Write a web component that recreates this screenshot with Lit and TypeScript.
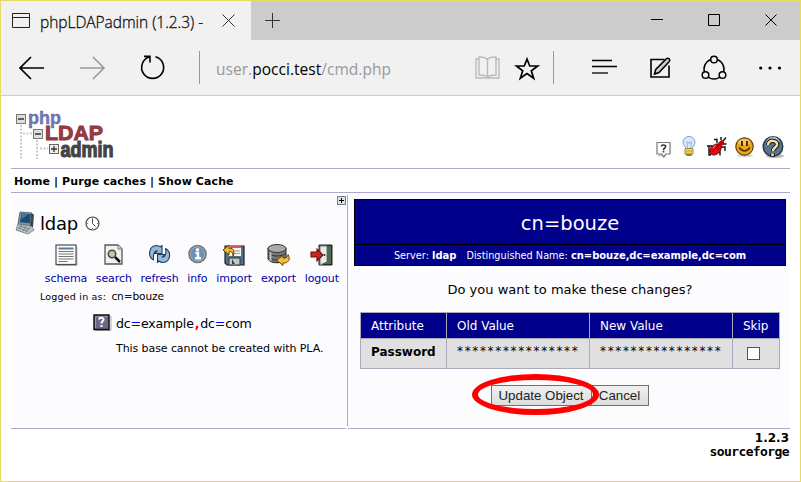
import { LitElement, html, css, svg } from "lit";
import { customElement, property } from "lit/decorators.js";

const icons: Record<string, unknown> = {
  page: svg`<path d="M.5.5h17v14H.5zM1 4.5h16" fill="none" stroke="#222"/>`,
  close: svg`<path d="M.5.5l12 12M12.5.5l-12 12" stroke="#333" fill="none"/>`,
  plus: svg`<path d="M7.5 0v15M0 7.5h15" stroke="#333" fill="none"/>`,
  min: svg`<path d="M0 5.5h12" stroke="#000"/>`,
  max: svg`<path d="M.5.5h11v11H.5z" stroke="#000" fill="none"/>`,
  exit: svg`<path d="M.5.5l11 11M11.5.5l-11 11" stroke="#000" fill="none"/>`,
  back: svg`<path d="M25 12H1M12 1L1 12l11 11" stroke="#000" stroke-width="1.7" fill="none"/>`,
  forward: svg`<path d="M0 12h24M13 1l11 11-11 11" stroke="#999" stroke-width="1.6" fill="none"/>`,
  reload: svg`<path d="M8.800 1.800A11 11 0 1 0 14.500 1.800M3 1.400h6v6" stroke="#000" stroke-width="1.6" fill="none"/>`,
  book: svg`<path d="M4 3H1v19h23V3h-3M12.5 3.5C10 .6 7 1 4 1v18c4 0 6 0 8.500 2 2.500-2 4.500-2 8.500-2V1c-3 0-6-.4-8.500 2.500zV21" stroke="#bbb" stroke-width="1.400" fill="none"/>`,
  star: svg`<path d="M12 3l2.700 7h8l-6.400 4.700 2.400 7.600-6.700-4.700-6.700 4.700 2.400-7.600L1.500 10h7.800z" stroke="#000" stroke-width="1.700" fill="none"/>`,
  lines: svg`<path d="M0 1.500h20M0 7.500h25" stroke="#000" stroke-width="1.300"/><path d="M0 14h16" stroke="#555" stroke-width="2"/>`,
  note: svg`<path d="M19 8.500V20H1V2.500h13.500" stroke="#000" stroke-width="1.600" fill="none"/><path d="M4.500 17l1.200-4.500L16.500 1.700q1.500-1 2.800.2 1 1.300 0 2.600L9 15.500z" stroke="#000" stroke-width="1.500" fill="#ccc"/>`,
  share: svg`<circle cx="13" cy="14" r="10" fill="none" stroke="#000" stroke-width="1.500"/><g fill="#f1f1f1" stroke="#000" stroke-width="1.500"><circle cx="13" cy="4.500" r="3.300"/><circle cx="4.500" cy="20" r="3.300"/><circle cx="21.500" cy="20" r="3.300"/></g>`,
  dots: svg`<g fill="#000"><circle cx="1.700" cy="2" r="1.600"/><circle cx="11" cy="2" r="1.600"/><circle cx="20.500" cy="2" r="1.600"/></g>`,
  bubble: svg`<path d="M3 16.500h6l1 2" stroke="#bbb" stroke-width="1.500" fill="none"/><path d="M2 3.500h13v11.500h-4l-2.500 3-1.500-3H2z" fill="#fff" stroke="#777" stroke-width="1.200"/><path d="M6.200 7.500c.3-2.200 4.600-2 4.400.2C10.400 9.400 8.500 9 8.500 11M8.500 11.800v1.700" stroke="#333" stroke-width="1.600" fill="none"/>`,
  bulb: svg`<path d="M5 13C4.500 10 2 9.500 2 6a6 5.500 0 0 1 12 0c0 3.500-2.500 4-3 7z" fill="#dce8fa" stroke="#7f9fd4"/><path d="M6 5.500l1.500 2 1-2 1 2 1-2L9.500 13h-3z" fill="none" stroke="#9db8e6"/><rect x="4" y="12.500" width="8" height="6" rx="1" fill="#f5df5d" stroke="#9b8836"/><path d="M4.500 15h7M4.500 17.300h7" stroke="#b89e30"/><path d="M5.500 19.500h5" stroke="#777"/>`,
  bug: svg`<path d="M1 10h5l1 3M3 10v5M7 15H3v4h2M11 7V3.500H8M15 4V1M16 6l4-4.500M16 8h4.500M14 11h5v4M11 16h3v3.500" stroke="#111" stroke-width="1.400" fill="none"/><ellipse cx="9.500" cy="13.500" rx="6.500" ry="4.700" transform="rotate(-42 9.500 13.500)" fill="#e00b12" stroke="#600" stroke-width=".8"/><ellipse cx="15" cy="7.500" rx="3.500" ry="2.500" transform="rotate(-42 15 7.500)" fill="#c00"/><path d="M6 16l8-8M10 9l3 5" stroke="#500" stroke-width=".8"/><path d="M7 12l3-3" stroke="#f88"/>`,
  smile: svg`<ellipse cx="10" cy="18.500" rx="8" ry="1.500" fill="#ccc"/><circle cx="9.500" cy="9.500" r="8.700" fill="#e9a51d" stroke="#60420c" stroke-width="1.200"/><ellipse cx="9" cy="5" rx="6" ry="3" fill="#f5c75c"/><path d="M7 4v5M12 4v5" stroke="#342000" stroke-width="1.800"/><path d="M4 10.500q5.500 7 11 0" fill="none" stroke="#4c2d00" stroke-width="1.400"/>`,
  help: svg`<ellipse cx="13" cy="20" rx="9" ry="2" fill="#bbb"/><circle cx="11" cy="10.500" r="9.800" fill="#58738e" stroke="#263746" stroke-width="1.400"/><path d="M4 10A7 7 0 0 1 18 6q-6-1-14 4" fill="#a9bccb"/><path d="M6 9c0-6 10-5 9 0-.7 2.500-4 3-4 6M10.500 17.500v3" fill="none" stroke="#111" stroke-width="4.500"/><path d="M6 9c0-6 10-5 9 0-.7 2.500-4 3-4 6M10.500 17.500v2.500" fill="none" stroke="#f6e3a0" stroke-width="2.500"/>`,
  computer: svg`<path d="M5 1l12 1-1 13-13-2z" fill="#8794a0" stroke="#46525c" stroke-width=".8"/><path d="M6.500 2.500l9 .8-.8 9-9.700-1z" fill="#174b78"/><path d="M7 3l6 .5-7 5z" fill="#3d7cab"/><path d="M16 2.500l3 1-1 13-3-2z" fill="#3d464a"/><path d="M3 13l13 2 3 4-6 4L1 19z" fill="#bac2c3" stroke="#66777c" stroke-width=".8"/><path d="M4 15l11 3M3 17l10 3M7 14l-3 4M11 15l-3 5M15 16l-4 5" stroke="#5d7078" stroke-width=".7"/>`,
  clock: svg`<circle cx="7.500" cy="7.500" r="6.500" fill="#fff" stroke="#444" stroke-width="1.200"/><path d="M7.500 3v4.500l3 3" stroke="#444" fill="none"/><path d="M7.500 2v1M7.500 12v1M2 7.500h1M12 7.500h1" stroke="#777"/>`,
  schema: svg`<path d="M2 21.500h20V3" stroke="#bbb" fill="none"/><rect x="1" y="1" width="20" height="19.500" fill="#fcfcfc" stroke="#4c4c4c" stroke-width="1.200"/><path d="M3.500 4.500h15" stroke="#587d9e" stroke-width="2"/><path d="M3.500 7.500h15M3.500 10h15M3.500 12.500h15M3.500 15h15M3.500 17.500h9" stroke="#777"/>`,
  search: svg`<path d="M2 1h13l4 4v15H2z" fill="#f1f1ef" stroke="#555" stroke-width="1.300"/><path d="M15 1v4h4" fill="#ddd" stroke="#777"/><path d="M12 13l5 5" stroke="#111" stroke-width="2.500"/><circle cx="9" cy="10" r="3.700" fill="#becdad" stroke="#454b40" stroke-width="1.500"/>`,
  refresh: svg`<g fill="#94b9da" stroke="#223e59" stroke-width="1.100" stroke-linejoin="round"><path d="M4.500 16C-2 12 0 2 7.500 1.500q2.500 0 4 1.500L13 1.500v8H5.500l2.800-2.700C5 6.500 4 11 4.500 16z"/><path d="M16.500 4.500c6.500 3.500 5 13.500-2.500 14q-2.500 0-4-1.500L8.500 18.500v-8H16l-2.800 2.700c3.300.3 4.300-4.200 3.300-8.700z"/></g>`,
  info: svg`<circle cx="9.500" cy="10" r="8.500" fill="#6f91b4" stroke="#777" stroke-width="1.600"/><circle cx="9.500" cy="10" r="7.300" fill="none" stroke="#b8ccdd" stroke-width=".5"/><circle cx="9.500" cy="5.700" r="1.700" fill="#fff"/><path d="M7.500 9h2.500V14M7 14.300h6" stroke="#fff" stroke-width="2.400" fill="none"/>`,
  import: svg`<path d="M2 2h19v19H4l-2-2z" fill="#52738b" stroke="#17212a" stroke-width="1.200"/><path d="M6 2h12v10H6z" fill="#f7f5f1"/><path d="M7 3h11" stroke="#d55" stroke-width="2"/><path d="M9 7h8M9 9.500h8" stroke="#b99"/><path d="M6 14h11v7H6z" fill="#c2c8c8" stroke="#333"/><path d="M9 15v5h3z" fill="#344"/><path d="M10 12.500C13 5 8 3.500 6 4.500V1L0 6l6 5V8c2-1 4 0 4 4.500z" fill="#eeb832" stroke="#624306"/>`,
  export: svg`<path d="M1 4v11c2 5 16 5 18 0V4z" fill="#777" stroke="#292929"/><path d="M1 9c3 4 15 4 18 0M1 13c3 4 15 4 18 0" stroke="#333" fill="none"/><path d="M3.500 8v9" stroke="#bbb" stroke-width="2"/><ellipse cx="10" cy="4.500" rx="9" ry="4" fill="#aaa" stroke="#333"/><path d="M21 10.500c3 5 0 9-5 8.500v2.500L9.500 16l6.500-4.500V14c3 .5 5-1 5-3.500z" fill="#eebc40" stroke="#634608"/>`,
  logout: svg`<path d="M9 1h13v20H9z" fill="#293e2d" stroke="#222"/><path d="M10 2h7v16l-7 3z" fill="#e9e9e5" stroke="#777"/><path d="M17 2h4v18h-8l4-2z" fill="#4e6b50"/><circle cx="14.500" cy="11" r="1" fill="#333"/><path d="M1 8h6V5l6 6-6 6v-4H1z" fill="#cf2420" stroke="#611" stroke-width="1.100"/>`,
  unknown: svg`<path d="M2 16.500h16V2" stroke="#aaa" fill="none"/><rect x="1" y="1" width="15" height="14.500" fill="#6c6888" stroke="#111" stroke-width="1.500"/><path d="M2.500 14V2.500H15" stroke="#9b98ae" fill="none"/><path d="M6 5.500c.5-2.500 5-2 4.500.5C10 7.500 8.500 7.500 8.500 9.500M8.500 11v2" stroke="#fff" stroke-width="2" fill="none"/>`,
  expand: svg`<rect x=".5" y=".5" width="8" height="8" fill="#dbe5e8" stroke="#708085"/><path d="M4.500 2v5M2 4.500h5" stroke="#000"/>`,
  node: svg`<rect x=".5" y=".5" width="9" height="9" fill="#ddd" stroke="#777"/><path d="M2 5h6" stroke="#333" stroke-width="1.500"/>`,
  nodeplus: svg`<rect x=".5" y=".5" width="9" height="9" fill="#eee" stroke="#666"/><path d="M2 5h6M5 2v6" stroke="#333" stroke-width="1.300"/>`,
};

const icon = (name: string, w: number, h: number, extra = "") =>
  html`<svg class="icon ${extra}" width=${w} height=${h} viewBox="0 0 ${w} ${h}">${icons[name]}</svg>`;

@customElement("browser-chrome")
class BrowserChrome extends LitElement {
  static styles = css`
    :host { display: block; font-family: "Noto Sans", sans-serif; color: #111; }
    .icon { display: block; flex: none; overflow: visible; }
    .strip { display: flex; height: 39px; background: #ccc; }
    .tab { width: 250px; box-sizing: border-box; padding: 0 15px 0 11px; display: flex; align-items: center; background: #f1f1f1; }
    .title { margin-left: 10px; margin-top: 3px; width: 182px; font: 300 15.500px "Open Sans", "Noto Sans", sans-serif; -webkit-text-stroke: .3px #111; white-space: nowrap; letter-spacing: -.04px; }
    .new { margin: 12px 0 0 14px; }
    .controls { margin-left: auto; margin-right: 23px; display: flex; gap: 45px; padding-top: 13px; }
    .bar { height: 55px; border-bottom: 1px solid #ccc; background: #f1f1f1; display: flex; align-items: center; box-sizing: content-box; }
    .back { margin-left: 18px; } .forward { margin-left: 36px; } .reload { margin-left: 36px; }
    .rule { width: 1px; height: 33px; background: #999; }
    .first { margin-left: 35px; }
    .url { margin-left: 16px; width: 259px; font-family: "Open Sans", "Noto Sans", sans-serif; font-size: 15.500px; letter-spacing: .03px; color: #999; padding-top: 3px; white-space: nowrap; }
    .url b { color: #000; font-weight: 400; }
    .star { margin-left: 15px; } .second { margin-left: 14px; } .lines { margin-left: 38px; }
    .note { margin-left: 33px; } .share { margin-left: 30px; } .dots { margin-left: 32px; }
  `;
  render() {
    return html`<div class="strip">
        <div class="tab">${icon("page", 18, 15)}<span class="title">phpLDAPadmin (1.2.3) -</span>${icon("close", 13, 13)}</div>
        ${icon("plus", 15, 15, "new")}
        <div class="controls">${icon("min", 12, 12)}${icon("max", 12, 12)}${icon("exit", 12, 12)}</div>
      </div>
      <div class="bar">
        ${icon("back", 25, 24, "back")}${icon("forward", 25, 24, "forward")}${icon("reload", 23, 25, "reload")}
        <span class="rule first"></span>
        <span class="url">user.<b>pocci.test</b>/cmd.php</span>
        ${icon("book", 25, 23)}${icon("star", 24, 24, "star")}<span class="rule second"></span>
        ${icon("lines", 25, 18, "lines")}${icon("note", 21, 22, "note")}${icon("share", 26, 26, "share")}${icon("dots", 23, 4, "dots")}
      </div>`;
  }
}

@customElement("pla-logo")
class PlaLogo extends LitElement {
  static styles = css`
    :host { display: block; }
    svg { display: block; overflow: visible; font-family: "Liberation Sans", sans-serif; font-weight: bold; }
  `;
  render() {
    return html`<svg width="102" height="56" viewBox="0 0 102 56">
      <path d="M6 15v34M22 30v19M8 23.500h9M25 38.500h8" stroke="#ccc" stroke-width="2" stroke-dasharray="2 1.500" fill="none"/>
      <g transform="translate(1 4)">${icons.node}</g><g transform="translate(18 19)">${icons.node}</g><g transform="translate(34 34)">${icons.nodeplus}</g>
      <text x="13" y="14" font-size="18" textLength="33" lengthAdjust="spacingAndGlyphs" fill="#7378b7" stroke="#5a5f9c" stroke-width=".4">php</text>
      <text x="30" y="29.500" font-size="21" textLength="58" lengthAdjust="spacingAndGlyphs" fill="#9c3c45" stroke="#8a343d" stroke-width=".9">LDAP</text>
      <text x="45.500" y="46.500" font-size="21.500" textLength="53" lengthAdjust="spacingAndGlyphs" fill="#444" stroke="#444" stroke-width="1.200">admin</text>
    </svg>`;
  }
}

@customElement("server-tree")
class ServerTree extends LitElement {
  @property({ attribute: false }) tools = [
    { name: "schema", w: 23, cell: 43 }, { name: "search", w: 21, cell: 37 }, { name: "refresh", w: 22, cell: 39 },
    { name: "info", w: 19, cell: 21 }, { name: "import", w: 23, cell: 37 }, { name: "export", w: 23, cell: 36 }, { name: "logout", w: 23, cell: 35 },
  ];
  static styles = css`
    :host { display: block; background: #fcfcff; position: relative; }
    .icon { display: block; flex: none; overflow: visible; }
    .expand { position: absolute; top: 1px; right: 1px; }
    .server { display: flex; align-items: center; padding: 16px 0 0 4px; height: 24px; font-size: 18px; }
    .name { margin: 0 6px 0 4px; width: 39px; letter-spacing: -.25px; }
    .tools { display: flex; gap: 7.800px; margin: 9px 0 0 33.500px; }
    .tool { display: flex; flex-direction: column; align-items: center; color: #0000a8; font-size: 11px; }
    .tool span { margin-top: 6px; line-height: 14px; letter-spacing: -.1px; }
    .login { margin: 3px 0 0 29px; font-size: 9.500px; line-height: 14px; white-space: nowrap; letter-spacing: .2px; }
    .login span { font-size: 10.600px; letter-spacing: -.1px; margin-left: 2px; }
    .eq { color: blue; font-style: normal; } .comma { color: red; font-style: normal; font-weight: bold; padding: 0 1px; }
    .base { display: flex; align-items: center; margin: 9px 0 0 82px; font-size: 12.600px; gap: 5px; height: 20px; letter-spacing: -.2px; }
    .message { margin: 8px 0 0 105px; font-size: 11px; line-height: 16px; letter-spacing: -.08px; }
  `;
  render() {
    return html`${icon("expand", 9, 9, "expand")}
      <div class="server">${icon("computer", 21, 24)}<span class="name">ldap</span>${icon("clock", 15, 15)}</div>
      <div class="tools">${this.tools.map(t => html`<div class="tool" style="width:${t.cell}px">${icon(t.name, t.w, 22)}<span>${t.name}</span></div>`)}</div>
      <div class="login">Logged in as: <span>cn<i class="eq">=</i>bouze</span></div>
      <div class="base">${icon("unknown", 18, 18)}<span>dc<i class="eq">=</i>example<i class="comma">,</i>dc<i class="eq">=</i>com</span></div>
      <div class="message">This base cannot be created with PLA.</div>`;
  }
}

@customElement("change-form")
class ChangeForm extends LitElement {
  static styles = css`
    :host { display: block; background: #fcfcff; }
    .head { margin: 6px 4px 0 6px; border: 1px solid #000; background: #00008b; color: #fff; text-align: center; height: 65px; }
    .dn { height: 44px; border-bottom: 1px solid #000; font-size: 19.500px; line-height: 48px; }
    .sub { font-size: 9.700px; line-height: 21px; white-space: nowrap; letter-spacing: .02px; }
    .sub b { font-size: 10px; letter-spacing: -.06px; } .sub span { margin-left: 7px; }
    .ask { text-align: center; font-size: 13px; line-height: 16px; margin-top: 16px; padding-left: 2px; }
    .grid { display: grid; grid-template-columns: 85px 142px 142px 46px; gap: 1px; padding: 1px; background: #aab; width: 418px; margin: 14px 0 0 12px; }
    .cell { background: #e0e0e0; height: 29px; padding: 0 0 0 10px; font-size: 12px; line-height: 19px; }
    .h { background: #00008b; color: #fff; height: 25px; line-height: 26px; letter-spacing: -.02px; }
    .strong { font-weight: bold; line-height: 26px; letter-spacing: 0; }
    .stars { letter-spacing: 1.650px; white-space: nowrap; line-height: 24px; }
    .check { width: 11px; height: 11px; border: 1px solid #555; background: #fff; margin: 8px 0 0 4px; }
    .buttons { display: flex; justify-content: center; margin: 16px 0 0 0; padding-left: 1px; position: relative; }
    button { font: 13.300px "Liberation Sans", sans-serif; letter-spacing: 0; height: 21px; padding: 0; border: 1px solid #707070; background: linear-gradient(#f0f0f0, #ddd); color: #222; border-radius: 0; white-space: nowrap; }
    .update { width: 101px; } .cancel { width: 58px; margin-left: -1px; }
    .ring { position: absolute; left: 124px; top: -11px; width: 115px; height: 29px; border: 6px solid red; border-radius: 50%; }
  `;
  render() {
    return html`<div class="head"><div class="dn">cn=bouze</div><div class="sub">Server: <b>ldap</b> <span>Distinguished Name:</span> <b>cn=bouze,dc=example,dc=com</b></div></div>
      <div class="ask">Do you want to make these changes?</div>
      <div class="grid">
        ${["Attribute", "Old Value", "New Value", "Skip"].map(t => html`<div class="cell h">${t}</div>`)}
        <div class="cell strong">Password</div><div class="cell stars">****************</div><div class="cell stars">****************</div>
        <div class="cell"><div class="check"></div></div>
      </div>
      <div class="buttons"><button class="update">Update Object</button><button class="cancel">Cancel</button><div class="ring"></div></div>`;
  }
}

@customElement("app-root")
class AppRoot extends LitElement {
  static styles = css`
    :host { display: block; box-sizing: border-box; width: 801px; height: 482px; border: 1px solid #e6dc65; background: #fff; color: #000; font-family: "DejaVu Sans", sans-serif; overflow: hidden; }
    .icon { display: block; flex: none; overflow: visible; }
    .page { width: 779px; margin-left: 10px; }
    header { display: flex; justify-content: space-between; height: 72px; }
    pla-logo { margin: 14px 0 0 4px; }
    .links { display: flex; align-items: center; gap: 8.500px; margin: 39px 6px 0 0; height: 23px; }
    .bubble { margin-top: 3px; }
    nav { border: solid #aaaad0; border-width: 1px 0; height: 23px; line-height: 25px; padding-left: 3px; font-size: 11px; font-weight: bold; letter-spacing: .1px; white-space: pre; }
    .columns { display: grid; grid-template-columns: 337px 442px; height: 234px; padding-bottom: 1px; }
    server-tree { border-right: 1px solid #aac; margin-top: 2px; height: 231px; }
    change-form { height: 234px; }
    .lines { display: grid; grid-template-columns: 335px 442px; gap: 2px; }
    .lines span { height: 1px; background: #aac; }
    footer { display: flex; flex-direction: column; align-items: flex-end; padding-right: 1px; font-size: 12px; font-weight: bold; line-height: 15px; padding-top: 2px; }
    .forge { font: bold 13px/12px "DejaVu Sans Mono", monospace; letter-spacing: -.6px; }
  `;
  render() {
    return html`<browser-chrome></browser-chrome>
      <div class="page">
        <header><pla-logo></pla-logo><div class="links">${icon("bubble", 17, 18, "bubble")}${icon("bulb", 17, 21)}${icon("bug", 20, 21)}${icon("smile", 19, 20)}${icon("help", 22, 22)}</div></header>
        <nav>Home | Purge caches | Show Cache</nav>
        <div class="columns"><server-tree></server-tree><change-form></change-form></div>
        <div class="lines"><span></span><span></span></div>
        <footer><span>1.2.3</span><span class="forge">sourceforge</span></footer>
      </div>`;
  }
}
